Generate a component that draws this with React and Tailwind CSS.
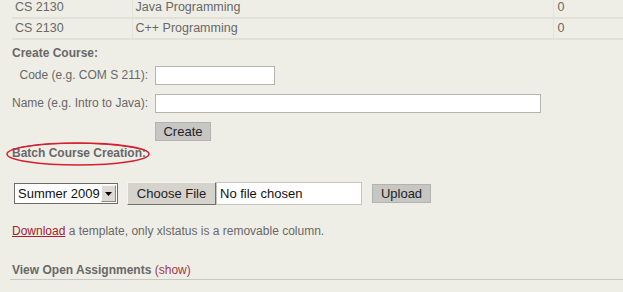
import React from "react";

const rows = [
  { code: "CS 2130", name: "Java Programming", count: "0" },
  { code: "CS 2130", name: "C++ Programming", count: "0" },
];

function App() {
  return (
    <div
      className="w-[623px] h-[292px] overflow-hidden bg-[#efeee6] text-[12px] text-[#686868] pl-[12px]"
      style={{ fontFamily: '"Liberation Sans", Arial, sans-serif' }}
    >
      {/* course table, top row cut off */}
      <table className="w-[611px] border-collapse mt-[-2px] text-[12.5px]">
        <tbody>
          {rows.map((r, i) => (
            <tr key={i} className="h-[20px] border-b-2 border-[#e2e1d8]">
              <td className="w-[120px] pl-[3px] border-r border-[#e4e3da]">{r.code}</td>
              <td className="w-[421px] pl-[3px] border-r border-[#e4e3da]">{r.name}</td>
              <td className="pl-[4px]">{r.count}</td>
            </tr>
          ))}
        </tbody>
      </table>

      <div className="mt-[5px] font-bold text-[12px] leading-[16px]">Create Course:</div>

      {/* create course form */}
      <div className="grid grid-cols-[138px_auto] gap-x-[5px] gap-y-[9px] mt-[5px] items-center text-[12px] whitespace-nowrap">
        <div className="text-right pr-[2px]">Code (e.g. COM S 211):</div>
        <div className="w-[120px] h-[19px] bg-white border border-[#b4b4b0]" />
        <div className="text-right pr-[2px]">Name (e.g. Intro to Java):</div>
        <div className="w-[386px] h-[19px] bg-white border border-[#b4b4b0]" />
        <div />
        <div className="w-[56px] h-[19px] bg-[#c6c6c4] border border-[#b2b2ae] text-[#222] text-[13px] flex items-center justify-center">
          Create
        </div>
      </div>

      {/* batch heading with red hand-drawn ring */}
      <div className="relative mt-[4px] h-[16px] leading-[16px] font-bold text-[12px] whitespace-nowrap">
        Batch Course Creation:
        <svg className="absolute left-[-7px] top-[-4px]" width="148" height="26" viewBox="0 0 148 26">
          <ellipse cx="73" cy="13" rx="71" ry="11" fill="none" stroke="#d42030" strokeWidth="1.5" />
          <path d="M10 8 C35 0 112 0 142 10" fill="none" stroke="#d42030" strokeWidth="1" />
        </svg>
      </div>

      {/* upload row */}
      <div className="flex items-center mt-[21px] ml-[2px] h-[24px] text-[13px] text-[#111] whitespace-nowrap">
        <div className="w-[104px] h-[21px] bg-white border border-[#6b6b6b] flex items-center justify-between pl-[3px]">
          <span>Summer 2009</span>
          <div className="w-[15px] h-[17px] mr-[1px] bg-[#dcdad2] border border-[#f8f8f8] border-r-[#888] border-b-[#888] flex items-center justify-center">
            <svg width="7" height="4" viewBox="0 0 7 4">
              <path d="M0 0 H7 L3.5 4 Z" fill="#000" />
            </svg>
          </div>
        </div>
        <div className="ml-[9px] w-[89px] h-[23px] bg-[#d6d3cc] border border-[#f4f4f0] border-r-[#707070] border-b-[#707070] flex items-center justify-center text-[#222]">
          Choose File
        </div>
        <div className="w-[146px] h-[23px] bg-white border border-[#c4c4c0] flex items-center pl-[3px] text-[#111]">
          No file chosen
        </div>
        <div className="ml-[10px] w-[59px] h-[19px] bg-[#c6c6c4] border border-[#b2b2ae] flex items-center justify-center text-[#222]">
          Upload
        </div>
      </div>

      <div className="mt-[17px] leading-[16px] whitespace-nowrap">
        <span className="text-[#a3202e] underline">Download</span> a template, only xlstatus is a removable column.
      </div>

      <div className="mt-[23px] mr-[-2px] ml-[-2px] pl-[2px] pb-[1px] border-b border-[#c8c8c0] font-bold leading-[16px] whitespace-nowrap">
        View Open Assignments <span className="font-normal text-[#a03848]">(show)</span>
      </div>
    </div>
  );
}

export default App;
